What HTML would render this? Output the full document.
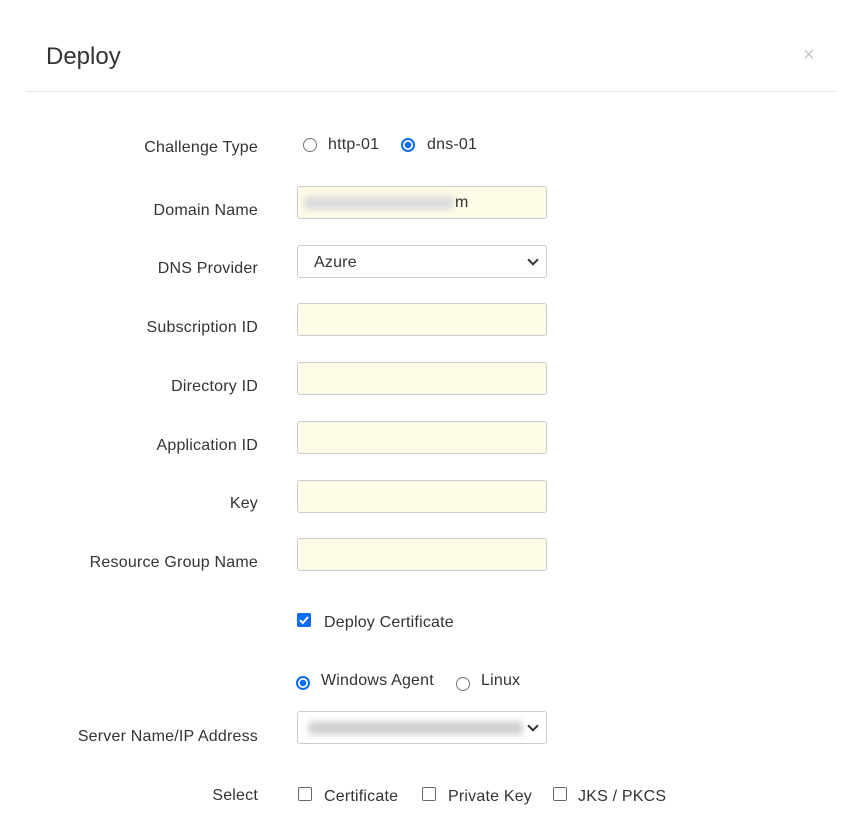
<!DOCTYPE html>
<html><head><style>
body{margin:0;width:865px;height:829px;background:#fff;font-family:"Liberation Sans",sans-serif;color:#333;position:relative;overflow:hidden}
.a{position:absolute;white-space:nowrap}
.t{font-size:24px;left:46px;top:43px;color:#333}
.x{left:803px;top:44px;font-size:20px;color:#c8c8c8}
.hr{left:26px;top:91px;width:811px;height:1px;background:#e5e5e5}
.l{right:607px;font-size:16px;text-align:right;line-height:20px;letter-spacing:0.2px}
.in{left:297px;width:248px;height:31px;border:1px solid #ccc;border-radius:3px;background:#fefbe6}
.sel{background:#fff}
.sel:after{content:"";position:absolute;right:9px;top:10px;width:6px;height:6px;border-right:2px solid #333;border-bottom:2px solid #333;transform:rotate(45deg)}
.tx{font-size:16px;line-height:20px;letter-spacing:0.2px}
.r{width:12px;height:12px;border:1px solid #777;border-radius:50%;background:#fff}
.rc{width:10px;height:10px;border:2px solid #0a6cf5;border-radius:50%;background:radial-gradient(circle,#0a6cf5 3px,#fff 3.5px)}
.c{width:12px;height:12px;border:1px solid #666;border-radius:2px;background:#fff}
.cc{width:14px;height:14px;border-radius:2px;background:#0a6cf5}
.blur{background:#ddd;filter:blur(3px);height:14px;border-radius:4px}
</style></head><body>
<div class="a t">Deploy</div>
<div class="a x">×</div>
<div class="a hr"></div>

<div class="a l" style="top:138px">Challenge Type</div>
<div class="a r" style="left:303px;top:138px"></div><div class="a tx" style="left:328px;top:135px">http-01</div>
<div class="a rc" style="left:401px;top:138px"></div><div class="a tx" style="left:427px;top:135px">dns-01</div>

<div class="a l" style="top:201px">Domain Name</div>
<div class="a in" style="top:186px"><div class="a blur" style="left:6px;top:9px;width:150px"></div><div class="a tx" style="left:157px;top:6px">m</div></div>

<div class="a l" style="top:259px">DNS Provider</div>
<div class="a in sel" style="top:245px"><div class="a tx" style="left:16px;top:7px">Azure</div></div>

<div class="a l" style="top:318px">Subscription ID</div>
<div class="a in" style="top:303px"></div>
<div class="a l" style="top:377px">Directory ID</div>
<div class="a in" style="top:362px"></div>
<div class="a l" style="top:436px">Application ID</div>
<div class="a in" style="top:421px"></div>
<div class="a l" style="top:494px">Key</div>
<div class="a in" style="top:480px"></div>
<div class="a l" style="top:553px">Resource Group Name</div>
<div class="a in" style="top:538px"></div>

<div class="a cc" style="left:297px;top:613px"><svg width="14" height="14" viewBox="0 0 14 14"><path d="M3 7.2l2.8 2.8L11 4" stroke="#fff" stroke-width="2" fill="none"/></svg></div>
<div class="a tx" style="left:324px;top:613px">Deploy Certificate</div>

<div class="a rc" style="left:296px;top:676px"></div><div class="a tx" style="left:321px;top:671px">Windows Agent</div>
<div class="a r" style="left:456px;top:677px"></div><div class="a tx" style="left:481px;top:671px">Linux</div>

<div class="a l" style="top:727px">Server Name/IP Address</div>
<div class="a in sel" style="top:711px;background:#fff"><div class="a blur" style="left:10px;top:9px;width:215px;background:#d4d4d4"></div></div>

<div class="a l" style="top:786px">Select</div>
<div class="a c" style="left:298px;top:787px"></div><div class="a tx" style="left:324px;top:787px">Certificate</div>
<div class="a c" style="left:422px;top:787px"></div><div class="a tx" style="left:448px;top:787px">Private Key</div>
<div class="a c" style="left:553px;top:787px"></div><div class="a tx" style="left:578px;top:787px">JKS / PKCS</div>
</body></html>
